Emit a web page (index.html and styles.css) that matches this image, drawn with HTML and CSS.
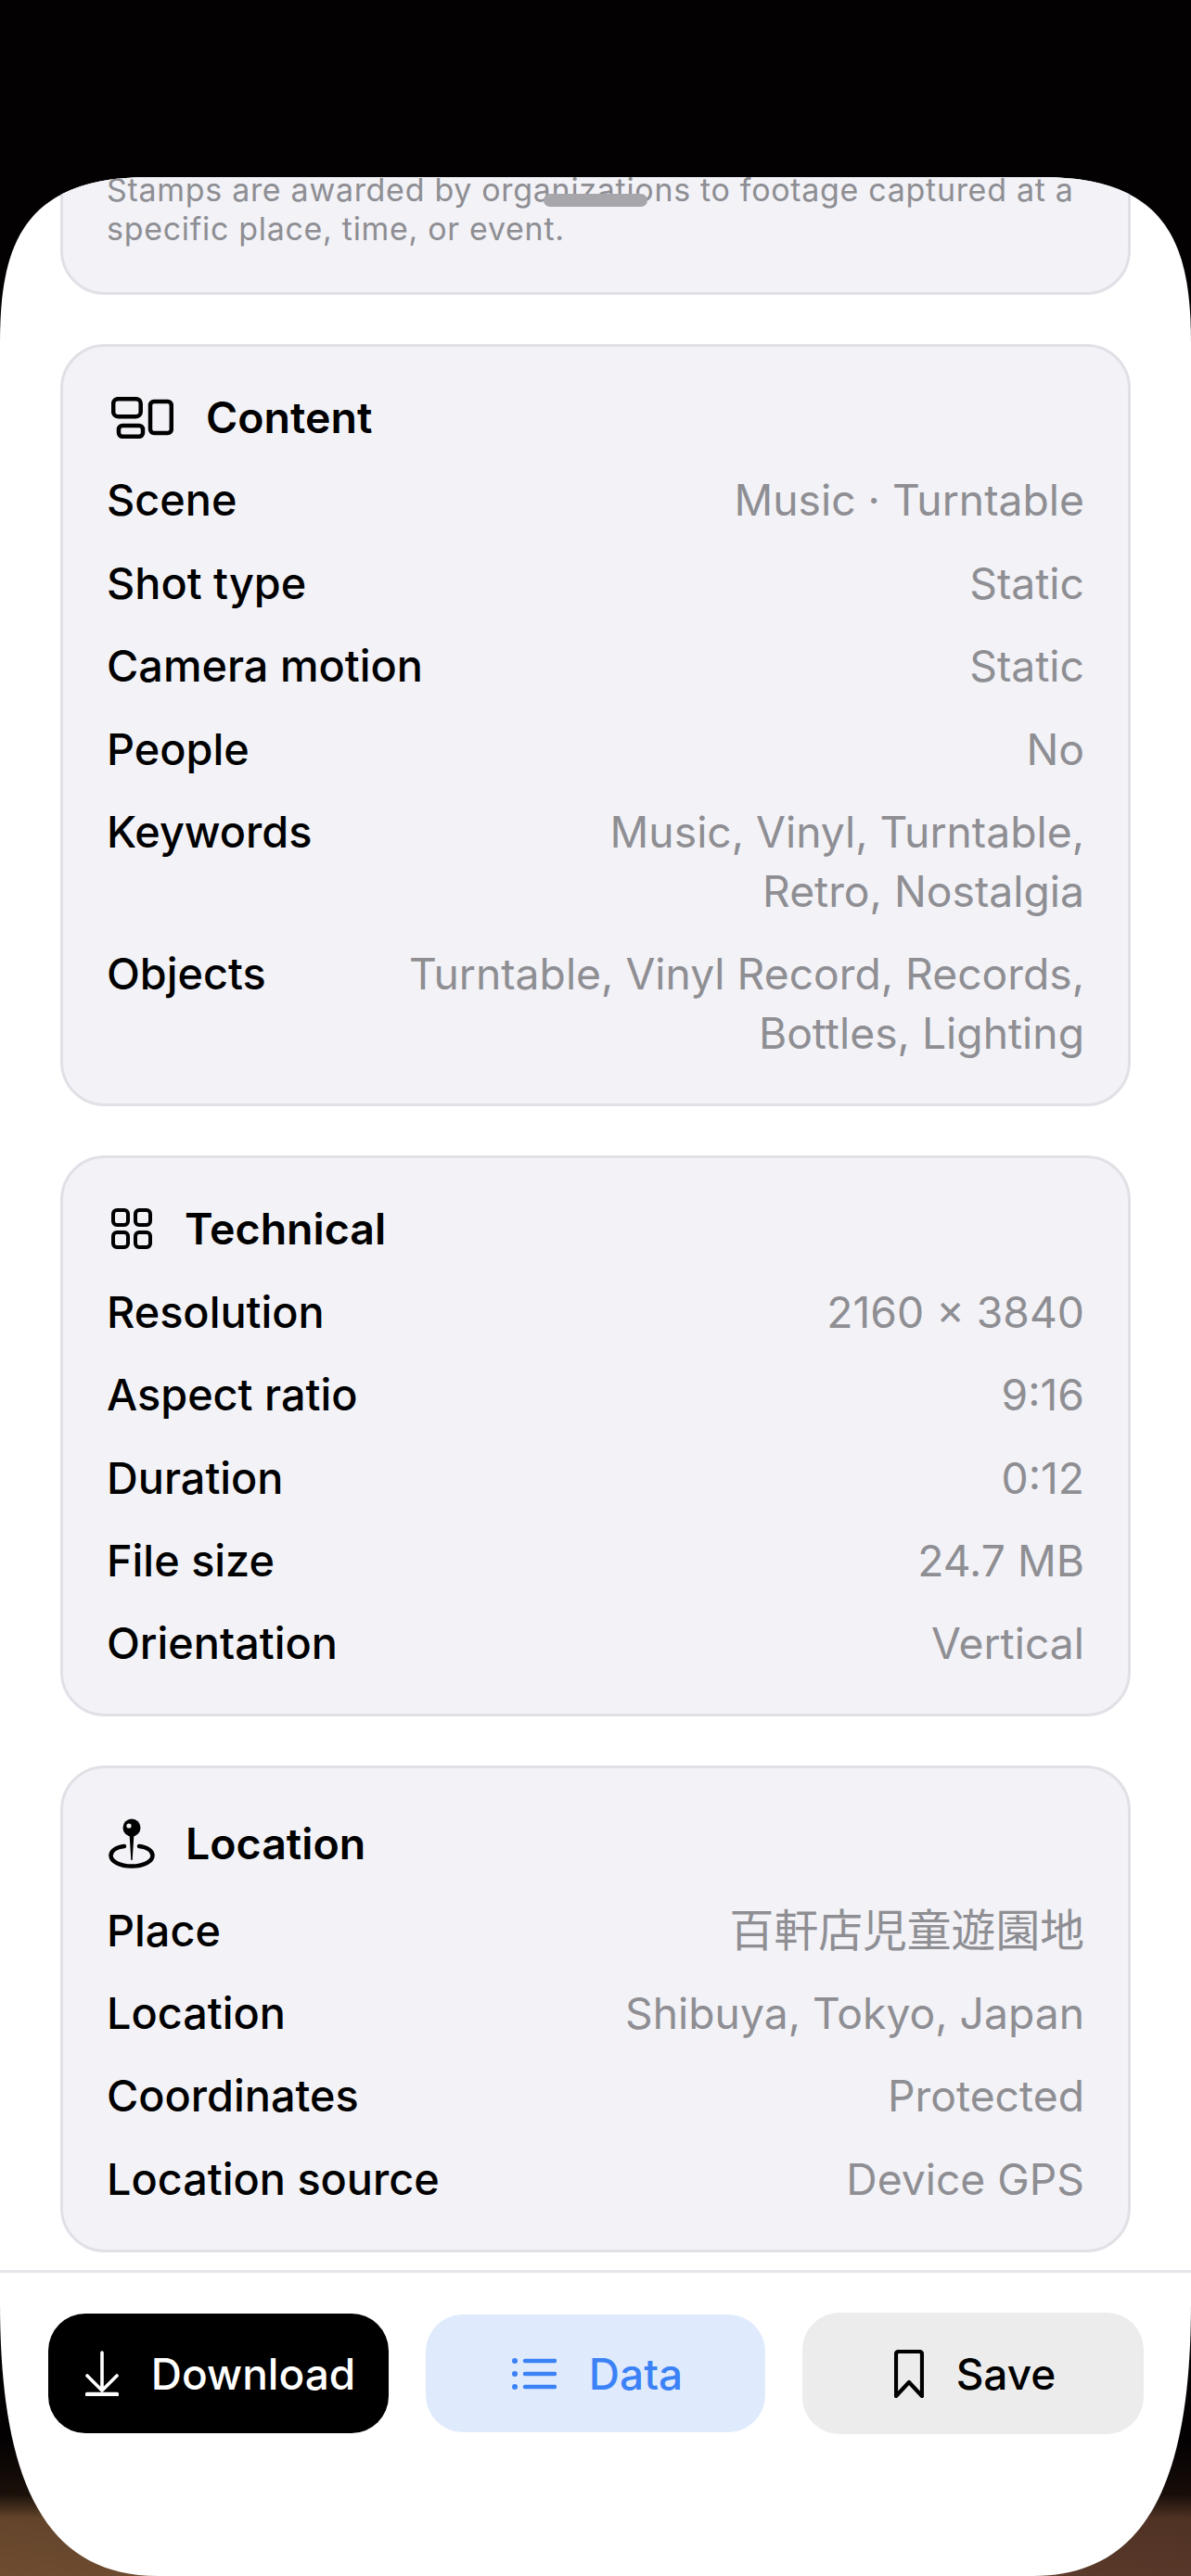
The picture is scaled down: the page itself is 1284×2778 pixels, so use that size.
FILE: index.html
```html
<!DOCTYPE html>
<html lang="en">
<head>
<meta charset="utf-8">
<title>Clip details</title>
<link rel="stylesheet" href="styles.css">
</head>
<body>
<main class="sheet">
  <div class="handle"></div>
  <div class="scroller">
    <section class="card card-stamps">
      <p class="note">Stamps are awarded by organizations to footage captured at a specific place, time, or event.</p>
    </section>
    <section class="card">
      <h2 class="heading">
        <svg class="icon icon-content" viewBox="0 0 67 45" fill="none" stroke="currentColor" stroke-width="4.500"><rect x="2.200" y="2.200" width="29.500" height="19" rx="5"/><rect x="8" y="31" width="26" height="11.800" rx="4"/><rect x="42" y="5" width="22.800" height="34" rx="4"/></svg>
        <span>Content</span>
      </h2>
      <div class="row"><span class="label">Scene</span><span class="value">Music · Turntable</span></div>
      <div class="row"><span class="label">Shot type</span><span class="value">Static</span></div>
      <div class="row"><span class="label">Camera motion</span><span class="value">Static</span></div>
      <div class="row"><span class="label">People</span><span class="value">No</span></div>
      <div class="row"><span class="label">Keywords</span><span class="value">Music, Vinyl, Turntable,<br>Retro, Nostalgia</span></div>
      <div class="row"><span class="label">Objects</span><span class="value">Turntable, Vinyl Record, Records,<br>Bottles, Lighting</span></div>
    </section>
    <section class="card">
      <h2 class="heading">
        <svg class="icon icon-grid" viewBox="0 0 44 44" fill="none" stroke="currentColor" stroke-width="4"><rect x="2" y="2" width="16" height="16" rx="4"/><rect x="26" y="2" width="16" height="16" rx="4"/><rect x="2" y="26" width="16" height="16" rx="4"/><rect x="26" y="26" width="16" height="16" rx="4"/></svg>
        <span>Technical</span>
      </h2>
      <div class="row"><span class="label">Resolution</span><span class="value">2160 × 3840</span></div>
      <div class="row"><span class="label">Aspect ratio</span><span class="value">9:16</span></div>
      <div class="row"><span class="label">Duration</span><span class="value">0:12</span></div>
      <div class="row"><span class="label">File size</span><span class="value">24.7 MB</span></div>
      <div class="row"><span class="label">Orientation</span><span class="value">Vertical</span></div>
    </section>
    <section class="card">
      <h2 class="heading heading-tall">
        <svg class="icon icon-pin" viewBox="0 0 50 54" fill="none"><path d="M17 30C8 31 2.500 35 2.500 40c0 6.500 10 11.500 22.500 11.500S47.500 46.500 47.500 40c0-5-5.500-9-14.500-10" stroke="currentColor" stroke-width="4.500" stroke-linecap="round"/><circle cx="25" cy="10" r="9.500" fill="currentColor"/><path d="M22.500 16h5l-1.800 29h-1.400z" fill="currentColor"/><circle cx="22" cy="8" r="2.600" fill="#f2f2f7"/></svg>
        <span>Location</span>
      </h2>
      <div class="row"><span class="label">Place</span><span class="value value-cjk">百軒店児童遊園地</span></div>
      <div class="row"><span class="label">Location</span><span class="value">Shibuya, Tokyo, Japan</span></div>
      <div class="row"><span class="label">Coordinates</span><span class="value">Protected</span></div>
      <div class="row"><span class="label">Location source</span><span class="value">Device GPS</span></div>
    </section>
  </div>
  <footer class="footer">
    <button class="btn btn-download">
      <svg class="btn-icon icon-download" viewBox="0 0 36 49" fill="none" stroke="currentColor" stroke-width="3.600" stroke-linecap="round" stroke-linejoin="round"><path d="M18 2v37M2 27l16 16 16-16"/><path d="M2 47h32" stroke-width="4.500"/></svg>
      <span>Download</span>
    </button>
    <button class="btn btn-data">
      <svg class="btn-icon icon-list" viewBox="0 0 48 34" fill="none" stroke="currentColor" stroke-width="4.500" stroke-linecap="round"><path d="M14 3h32M14 17h32M14 31h32"/><path d="M3 3h.01M3 17h.01M3 31h.01" stroke-width="6"/></svg>
      <span>Data</span>
    </button>
    <button class="btn btn-save">
      <svg class="btn-icon icon-bookmark" viewBox="0 0 32 52" fill="none" stroke="currentColor" stroke-width="4.200" stroke-linecap="round" stroke-linejoin="round"><path d="M2 50V5q0-3 3-3h22q3 0 3 3v45L16 35z"/></svg>
      <span>Save</span>
    </button>
  </footer>
</main>
</body>
</html>
```

FILE: styles.css
```css
* {
  box-sizing: border-box;
}

html,
body {
  margin: 0;
  height: 2778px;
  overflow: hidden;
}

body {
  padding-top: 191px;
  font-family: Inter, "Noto Sans CJK JP", sans-serif;
  color: #000;
  background:
    linear-gradient(to bottom, #030102 0, #030102 2630px, rgba(12, 6, 3, 0.85) 2690px, rgba(12, 6, 3, 0.1) 2716px, rgba(3, 1, 2, 0) 2778px),
    linear-gradient(to right, #6e4c30, #573728);
}

.sheet {
  position: relative;
  display: flex;
  flex-direction: column;
  width: 1284px;
  height: 2587px;
  background: #fff;
  clip-path: path("M0 180C0 80 20 0 160 0H1124C1264 0 1284 80 1284 180V2292C1284 2469 1244 2587 1114 2587H170C40 2587 0 2469 0 2292Z");
}

.handle {
  position: absolute;
  top: 18px;
  left: 586px;
  width: 112px;
  height: 14px;
  border-radius: 7px;
  background: #a6a6ab;
}

.scroller {
  display: flex;
  flex-direction: column;
  gap: 53px;
  height: 2257px;
  padding: 0 65px;
  overflow: hidden;
}

.card {
  display: flex;
  flex-direction: column;
  flex: none;
  gap: 25.4px;
  padding: 44px 47px;
  border: 3px solid #e0e0e6;
  border-radius: 48px;
  background: #f2f2f7;
}

.card-stamps {
  margin-top: -60px;
  padding-top: 50px;
  padding-bottom: 47px;
}

.note {
  margin: 0;
  font-size: 34px;
  line-height: 42px;
  letter-spacing: 0.69px;
  color: #8e8e93;
}

.heading {
  display: flex;
  align-items: center;
  gap: 35px;
  height: 64px;
  margin: 0;
  font-size: 46.5px;
  font-weight: 600;
  line-height: 64px;
}

.heading-tall {
  height: 73px;
  gap: 33px;
}

.icon {
  flex: none;
}

.icon-content {
  width: 67px;
  height: 45px;
  margin-left: 5px;
}

.icon-grid {
  width: 44px;
  height: 44px;
  margin-left: 5px;
}

.icon-pin {
  width: 50px;
  height: 54px;
  margin-left: 2px;
}

.row {
  display: flex;
  justify-content: space-between;
  align-items: flex-start;
  font-size: 46.25px;
  line-height: 64px;
}

.label {
  font-size: 46.8px;
  font-weight: 500;
  white-space: nowrap;
}

.value {
  color: #8e8e93;
  text-align: right;
}

.value-cjk {
  font-size: 47.8px;
}

.footer {
  display: flex;
  align-items: center;
  gap: 40px;
  height: 330px;
  padding: 0 0 110px 52px;
  border-top: 3px solid #e5e5ea;
}

.btn {
  display: flex;
  align-items: center;
  justify-content: center;
  gap: 35px;
  padding: 0 0 0 4px;
  border: 0;
  border-radius: 40px;
  font-family: inherit;
  font-size: 46px;
  font-weight: 500;
}

.btn-download {
  width: 367px;
  height: 129px;
  color: #fff;
  background: #000;
}

.btn-data {
  width: 366px;
  height: 127px;
  color: #3b82f6;
  background: #dfeafc;
}

.btn-save {
  width: 368px;
  height: 131px;
  color: #000;
  background: #ececec;
}

.icon-download {
  width: 36px;
  height: 49px;
}

.icon-list {
  width: 48px;
  height: 34px;
}

.icon-bookmark {
  width: 32px;
  height: 52px;
}
```
